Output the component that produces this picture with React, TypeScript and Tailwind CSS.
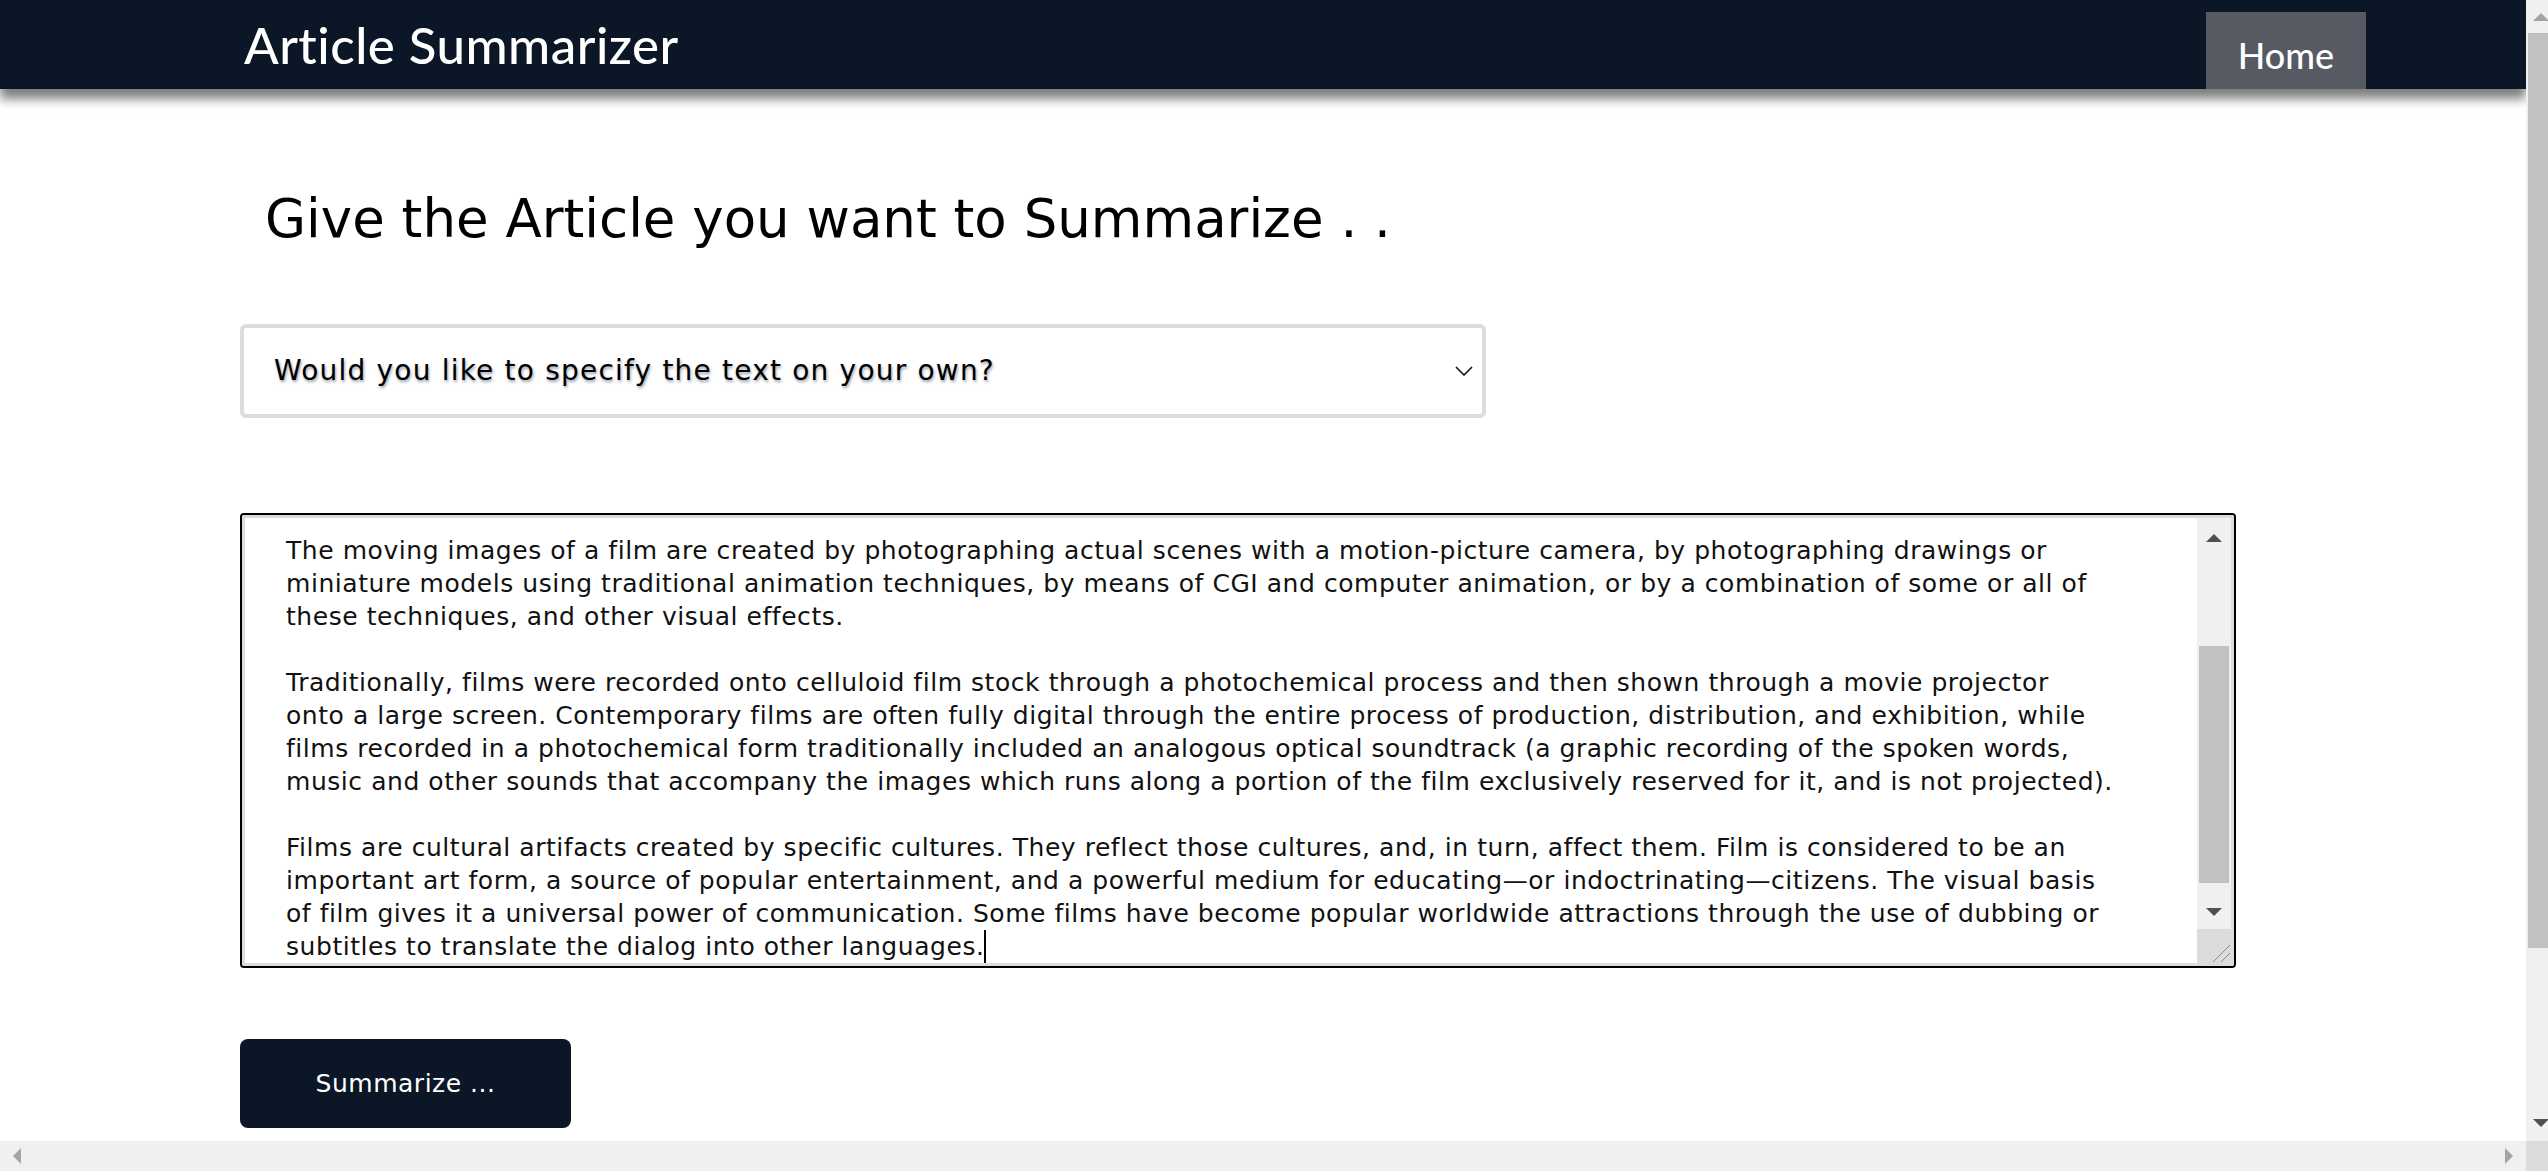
import React from "react";

const lines: string[] = [
  "The moving images of a film are created by photographing actual scenes with a motion-picture camera, by photographing drawings or",
  "miniature models using traditional animation techniques, by means of CGI and computer animation, or by a combination of some or all of",
  "these techniques, and other visual effects.",
  "",
  "Traditionally, films were recorded onto celluloid film stock through a photochemical process and then shown through a movie projector",
  "onto a large screen. Contemporary films are often fully digital through the entire process of production, distribution, and exhibition, while",
  "films recorded in a photochemical form traditionally included an analogous optical soundtrack (a graphic recording of the spoken words,",
  "music and other sounds that accompany the images which runs along a portion of the film exclusively reserved for it, and is not projected).",
  "",
  "Films are cultural artifacts created by specific cultures. They reflect those cultures, and, in turn, affect them. Film is considered to be an",
  "important art form, a source of popular entertainment, and a powerful medium for educating\u2014or indoctrinating\u2014citizens. The visual basis",
  "of film gives it a universal power of communication. Some films have become popular worldwide attractions through the use of dubbing or",
];

function Tri({ dir, color }: { dir: "up" | "down" | "left" | "right"; color: string }) {
  if (dir === "up")
    return (
      <svg width="16" height="8" viewBox="0 0 16 8" className="block">
        <polygon points="0,8 8,0 16,8" fill={color} />
      </svg>
    );
  if (dir === "down")
    return (
      <svg width="16" height="8" viewBox="0 0 16 8" className="block">
        <polygon points="0,0 16,0 8,8" fill={color} />
      </svg>
    );
  if (dir === "left")
    return (
      <svg width="8" height="16" viewBox="0 0 8 16" className="block">
        <polygon points="8,0 8,16 0,8" fill={color} />
      </svg>
    );
  return (
    <svg width="8" height="16" viewBox="0 0 8 16" className="block">
      <polygon points="0,0 0,16 8,8" fill={color} />
    </svg>
  );
}

export default function App() {
  return (
    <div className="flex h-screen w-full overflow-hidden bg-white font-['DejaVu_Sans',sans-serif] text-black">
      <div className="flex min-w-0 flex-1 flex-col">
        <div className="min-h-0 flex-1 overflow-hidden">
          <header className="relative z-10 flex h-[89px] items-center justify-between bg-[#0b1627] pl-[244px] pr-[160px] shadow-[0_10px_10px_#7f7f7f]">
            <h1 className="font-['Lato',sans-serif] text-[51px] font-medium leading-none tracking-[0.5px] text-white">
              Article Summarizer
            </h1>
            <div className="flex h-[77px] w-[160px] items-center justify-center self-end bg-[#575a63] pt-[8px] font-['Lato',sans-serif] text-[36px] font-medium leading-none text-white">
              Home
            </div>
          </header>
          <main className="pl-[240px]">
            <h2 className="ml-[25px] mt-[103px] text-[53px] font-normal leading-none">
              Give the Article you want to Summarize . .
            </h2>
            <div className="mt-[79px] flex h-[94px] w-[1246px] items-center justify-between rounded-[6px] border-4 border-[#dcdcdc] pl-[30px] pr-[9px]">
              <span className="text-[28px] tracking-[1.2px] [text-shadow:1px_2px_3px_rgba(70,80,100,0.55)]">
                Would you like to specify the text on your own?
              </span>
              <svg width="18" height="10" viewBox="0 0 18 10" className="block">
                <polyline points="1,1 9,9 17,1" fill="none" stroke="#111" strokeWidth="1.6" />
              </svg>
            </div>
            <div className="mt-[95px] flex h-[455px] w-[1996px] rounded-[4px] border-2 border-black">
              <div className="flex min-w-0 flex-1 rounded-[2px] border-[3px] border-[#dcdcdc]">
                <div className="min-w-0 flex-1 overflow-hidden whitespace-pre pl-[41px] pt-[16px] text-[25px] leading-[33px] tracking-[0.55px] text-[#111]">
                  {lines.map((l, i) => (
                    <div key={i} className="h-[33px]">
                      {l}
                    </div>
                  ))}
                  <div className="h-[33px]">
                    subtitles to translate the dialog into other languages.
                    <span className="inline-block h-[33px] w-[2px] bg-black align-top" />
                  </div>
                </div>
                <div className="flex w-[34px] shrink-0 flex-col">
                  <div className="flex flex-1 flex-col items-center bg-[#f0f0f0] pb-[13px] pt-[16px]">
                    <Tri dir="up" color="#505050" />
                    <div className="mt-[104px] h-[237px] w-[30px] bg-[#c1c1c1]" />
                    <div className="flex-1" />
                    <Tri dir="down" color="#505050" />
                  </div>
                  <div className="h-[34px] bg-[#dcdcdc]">
                    <svg width="34" height="34" viewBox="0 0 34 34" className="block">
                      <line x1="16" y1="33" x2="33" y2="16" stroke="#8a8a8a" strokeWidth="1" />
                      <line x1="24" y1="33" x2="33" y2="24" stroke="#8a8a8a" strokeWidth="1" />
                    </svg>
                  </div>
                </div>
              </div>
            </div>
            <button className="mt-[71px] flex h-[89px] w-[331px] items-center justify-center rounded-lg bg-[#0b1627] text-[25px] tracking-[0.5px] text-white">
              Summarize ...
            </button>
          </main>
        </div>
        <div className="flex h-[30px] shrink-0 items-center justify-between bg-[#f0f0f0] px-[13px]">
          <Tri dir="left" color="#a3a3a3" />
          <Tri dir="right" color="#a3a3a3" />
        </div>
      </div>
      <div className="flex w-[22px] shrink-0 flex-col overflow-hidden">
        <div className="flex w-[30px] min-h-0 flex-1 flex-col items-center bg-[#f0f0f0] pb-[14px] pt-[13px]">
          <Tri dir="up" color="#a3a3a3" />
          <div className="mt-[12px] h-[915px] w-[26px] shrink-0 bg-[#c1c1c1]" />
          <div className="flex-1" />
          <Tri dir="down" color="#505050" />
        </div>
        <div className="h-[30px] w-[30px] shrink-0 bg-[#dcdcdc]" />
      </div>
    </div>
  );
}
